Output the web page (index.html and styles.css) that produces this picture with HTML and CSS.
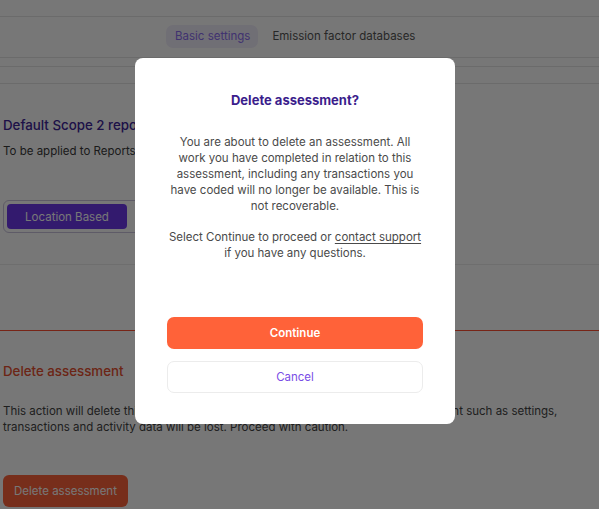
FILE: index.html
```html
<!DOCTYPE html>
<html lang="en">
<head>
<meta charset="utf-8">
<title>Delete assessment</title>
<link rel="stylesheet" href="styles.css">
</head>
<body>
<div class="page">
  <div class="topbar"></div>
  <nav class="tabs">
    <span class="tab tab-active">Basic settings</span>
    <span class="tab">Emission factor databases</span>
  </nav>
  <div class="strip strip-a"></div>
  <div class="strip strip-b"></div>

  <section class="section">
    <div class="clip">
      <h2 class="section-title">Default Scope 2 reporting method</h2>
    </div>
    <p class="section-text">To be applied to Reports</p>
    <div class="toggle">
      <button class="toggle-btn toggle-on">Location Based</button>
      <button class="toggle-btn">Market Based</button>
    </div>
  </section>

  <div class="spacer"></div>

  <section class="danger">
    <h2 class="danger-title">Delete assessment</h2>
    <p class="danger-text">This action will delete this assessment and all information relating to this assessment such as settings,<br>transactions and activity data will be lost. Proceed with caution.</p>
    <button class="danger-btn">Delete assessment</button>
  </section>
</div>

<div class="overlay"></div>

<div class="modal" role="dialog">
  <h3 class="modal-title">Delete assessment?</h3>
  <p class="modal-text">You are about to delete an assessment. All<br>work you have completed in relation to this<br>assessment, including any transactions you<br>have coded will no longer be available. This is<br>not recoverable.</p>
  <p class="modal-text">Select Continue to proceed or <a class="link" href="#">contact support</a><br>if you have any questions.</p>
  <div class="modal-actions">
    <button class="btn btn-primary">Continue</button>
    <button class="btn btn-secondary">Cancel</button>
  </div>
</div>
</body>
</html>
```

FILE: styles.css
```css
* { box-sizing: border-box; }
html, body { margin: 0; padding: 0; }
body {
  font-family: Inter, "Noto Sans", sans-serif;
  background: #ffffff;
  color: #333;
  width: 599px;
  height: 509px;
  overflow: hidden;
}
.page { width: 599px; }
.topbar { height: 17px; border-bottom: 1px solid #e6e6e6; }
.tabs {
  height: 41px;
  border-bottom: 1px solid #e6e6e6;
  display: flex;
  align-items: center;
  gap: 6px;
  padding-left: 166px;
  padding-bottom: 2px;
}
.tab {
  font-size: 11.5px;
  color: #555;
  padding: 5px 8px 5px 8px;
  border-radius: 7px;
  line-height: 13px;
}
.tab-active { background: #f1edfb; color: #8a6ef0; padding-left: 9px; }
.strip-a { height: 9px; border-bottom: 1px solid #e6e6e6; }
.strip-b { height: 17px; border-bottom: 1px solid #e6e6e6; }

.section { padding: 30px 3px 0; height: 181px; border-bottom: 1px solid #ebebeb; }
.clip { width: 132px; overflow: hidden; }
.section-title {
  margin: 0;
  font-size: 13.3px;
  font-weight: 500;
  color: #40259a;
  line-height: 22px;
  white-space: nowrap;
}
.section-text { margin: 7px 0 0; font-size: 11.5px; line-height: 16px; color: #3a3a3a; white-space: nowrap; }
.toggle {
  margin-top: 41px;
  display: inline-flex;
  gap: 4px;
  padding: 3px;
  border: 1px solid #c9c3dc;
  border-radius: 6px;
}
.toggle-btn {
  font-family: inherit;
  font-size: 11.5px;
  border: 0;
  border-radius: 4px;
  height: 25px;
  width: 120px;
  background: transparent;
  color: #6c3aee;
}
.toggle-on { background: #6e38ec; color: #fff; }

.spacer { height: 66px; border-bottom: 1px solid #ff4f32; }

.danger { padding: 31px 3px 0; }
.danger-title { margin: 0; font-size: 13.3px; font-weight: 500; color: #e8502f; line-height: 18px; }
.danger-text { margin: 23px 0 0; font-size: 11.5px; line-height: 16px; color: #444; white-space: nowrap; }
.danger-btn {
  margin-top: 40px;
  font-family: inherit;
  font-size: 11.5px;
  color: #fff;
  background: #ff633b;
  border: 0;
  border-radius: 6px;
  height: 32px;
  width: 125px;
}

.overlay {
  position: fixed;
  inset: 0;
  background: rgba(0, 0, 0, 0.533);
}

.modal {
  position: fixed;
  left: 135px;
  top: 58px;
  width: 320px;
  height: 366px;
  background: #fff;
  border-radius: 8px;
  padding: 32px 32px 31px;
  display: flex;
  flex-direction: column;
  align-items: stretch;
  text-align: center;
}
.modal-title {
  margin: 0;
  font-size: 13px;
  font-weight: 700;
  color: #3b1d8c;
  line-height: 20px;
}
.modal-text {
  margin: 24px 0 0;
  font-size: 11.5px;
  line-height: 16px;
  color: #4a4a4a;
  white-space: nowrap;
}
.modal-text + .modal-text { margin-top: 15px; }
.link { color: #4a4a4a; text-decoration: underline; text-underline-offset: 2px; }
.modal-actions {
  margin-top: auto;
  display: flex;
  flex-direction: column;
  gap: 12px;
}
.btn {
  font-family: inherit;
  height: 32px;
  border-radius: 7px;
  font-size: 11.5px;
  cursor: pointer;
}
.btn-primary { background: #ff6239; color: #fff; border: 0; font-weight: 600; }
.btn-secondary { background: #fff; color: #7a4de6; border: 1px solid #ececec; }
```
